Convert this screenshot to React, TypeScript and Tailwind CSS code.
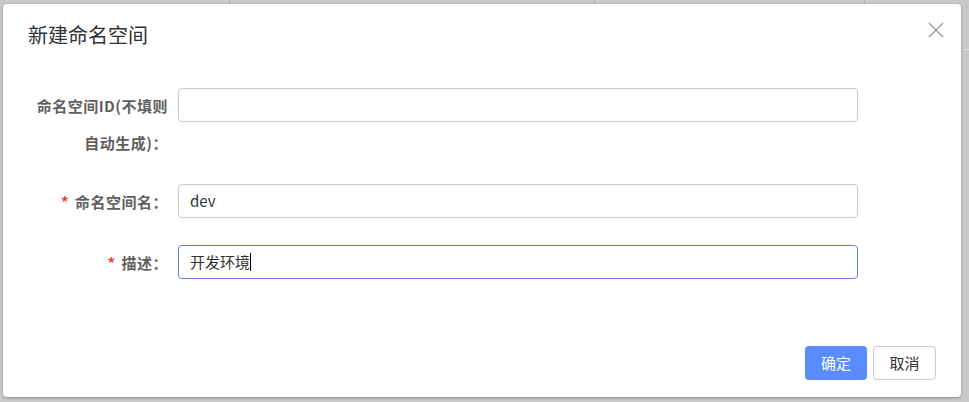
import React from 'react';

const font = { fontFamily: '"Noto Sans CJK SC", "Liberation Sans", sans-serif' };

function Field({ label, required, children }: { label: React.ReactNode; required?: boolean; children: React.ReactNode }) {
  return (
    <div className="flex items-start">
      <div className="w-[175px] shrink-0 pr-[10px] text-right text-[15px] leading-[37px] font-bold text-[#5f6062] tracking-[0.5px]">
        {required && <span className="text-[#f03c2d] mr-[6px]">*</span>}
        {label}
      </div>
      <div className="w-[680px] pt-[1px]">{children}</div>
    </div>
  );
}

export default function App() {
  return (
    <div className="relative w-[969px] h-[402px] bg-[#c9c9c9] overflow-hidden" style={font}>
      {/* backdrop table lines */}
      <div className="absolute top-0 left-[229px] w-px h-[4px] bg-[#a9a9a9]" />
      <div className="absolute top-0 left-[594px] w-px h-[4px] bg-[#b0b0b0]" />
      <div className="absolute top-0 left-[864px] w-px h-[4px] bg-[#b0b0b0]" />
      <div className="absolute top-[49px] left-[962px] w-[7px] h-px bg-[#dedede]" />

      <div className="absolute left-[3px] top-[4px] w-[958px] h-[393px] bg-white rounded-[4px] shadow-[0_1px_3px_rgba(0,0,0,0.3)] flex flex-col">
        <div className="flex items-start justify-between pl-[25px] pr-[17px] pt-[18px]">
          <span className="text-[20px] leading-[26px] text-[#303133]">新建命名空间</span>
          <svg width="16" height="16" viewBox="0 0 16 16">
            <path d="M1 1 L15 15 M15 1 L1 15" stroke="#909399" strokeWidth="1.2" fill="none" />
          </svg>
        </div>

        <div className="mt-[39px] flex flex-col">
          <Field label={<>命名空间ID(不填则<br />自动生成)：</>}>
            <div className="h-[34px] border border-[#c9c9d6] rounded-[4px]" />
          </Field>
          <div className="h-[22px]" />
          <Field label="命名空间名：" required>
            <div className="h-[34px] border border-[#c9c9d6] rounded-[4px] px-[11px] flex items-center text-[15px] text-[#303133]">dev</div>
          </Field>
          <div className="h-[24px]" />
          <Field label="描述：" required>
            <div className="h-[34px] border border-[#5b7ff0] rounded-[4px] px-[11px] flex items-center text-[15px] text-[#303133]">
              开发环境<span className="inline-block w-px h-[18px] bg-black" />
            </div>
          </Field>
        </div>

        <div className="mt-auto mb-[17px] flex justify-end gap-[6px] pr-[25px]">
          <button className="w-[62px] h-[34px] rounded-[4px] bg-[#5b8cff] text-white text-[15px]">确定</button>
          <button className="w-[63px] h-[34px] rounded-[4px] border border-[#c9c9d6] bg-white text-[#303133] text-[15px]">取消</button>
        </div>
      </div>
    </div>
  );
}
